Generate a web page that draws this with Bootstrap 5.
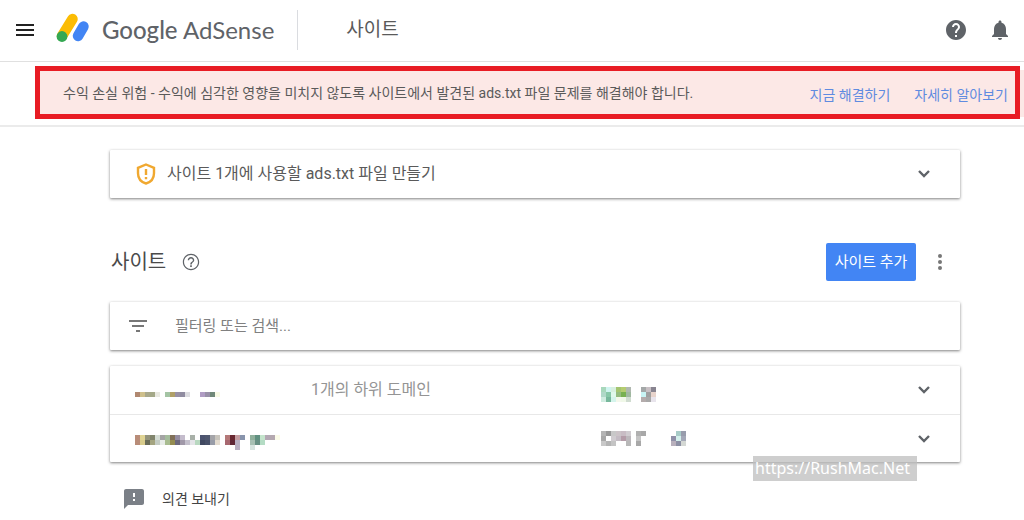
<!DOCTYPE html>
<html lang="ko">
<head>
<meta charset="utf-8">
<meta name="viewport" content="width=device-width, initial-scale=1">
<title>Google AdSense - 사이트</title>
<link href="https://cdn.jsdelivr.net/npm/bootstrap@5.3.0/dist/css/bootstrap.min.css" rel="stylesheet">
<style>
body{font-family:Roboto,"Noto Sans CJK KR",sans-serif;font-size:14px;line-height:20px;color:#5a5a5a;background:#fff}
svg{display:block;flex:none}
.icon-btn{border:0;background:none;padding:0;color:#5f6368}
.topbar{height:62px;border-bottom:1px solid #e0e0e0;padding:0 14px 2px 16px}
.brand-logo{overflow:visible;margin-right:12px}
.brand-name{font-family:Lato,sans-serif;font-size:24px;line-height:32px;color:#5f6368;text-decoration:none}
.brand-name b{font-weight:500}
.brand-rule{width:1px;height:40px;background:#dadce0;margin-left:23px}
.page-name{font-size:19px;line-height:28px;margin-left:48px}
.notice-strip{padding:4px 0 6px 35px;border-bottom:2px solid #ebebeb}
.notice-back{background:linear-gradient(#fce8e6,#fce8e6) right 4px/50% 47px no-repeat;padding-right:4px}
.notice{min-height:53px;border:5px solid #e81c24;background:#fce8e6;padding:0 7px 0 23px}
.notice a{color:#5f8be0;text-decoration:none}
.page-body{padding:23px 64px 0 110px}
.panel{background:#fff;box-shadow:0 1px 3px rgba(0,0,0,.5);min-height:48px;border-radius:1px}
.panel-row{height:48px;padding:0 29px 0 25px}
.panel-row + .panel-row{border-top:1px solid #e8e8e8}
.alert-text{font-size:16px;margin-left:10px}
.site-bar{margin:45px 0 21px;padding-left:1px}
.heading{font-size:20px;line-height:28px;margin:0;font-weight:400;color:#4a4a4a}
.add-btn{background:#4285f4;color:#fff;border:0;border-radius:2px;width:90px;height:38px;padding:0;font-size:15px}
.add-btn:hover{background:#3476e8;color:#fff}
.more-btn{margin:0 12px 0 16px}
.filter-icon{margin:0 28px 0 -6px}
.search-input{border:0;outline:0;background:none;flex:1;min-width:0;padding:0;font-size:15px;color:#555}
.search-input::placeholder{color:#808080;opacity:1}
.col-site{width:176px}
.col-sub{width:290px;color:#949494;font-size:16px}
.mosaic-low{margin-top:8px}
.feedback{color:#444;text-decoration:none;margin:27px 0 0 14px;gap:18px}
.watermark{position:absolute;right:43px;bottom:-19px;width:164px;height:25px;background:rgba(190,190,190,.75);color:#fff;font:16px/25px "Noto Sans",sans-serif;padding-left:2px;white-space:nowrap}
</style>
</head>
<body>
<header class="topbar d-flex align-items-center">
  <button class="icon-btn" aria-label="메뉴"><svg width="18" height="14" fill="none" stroke="#222" stroke-width="2"><path d="M0 2h18M0 7h18M0 12h18"/></svg></button>
  <svg class="brand-logo ms-4" width="32" height="30" viewBox="0 0 32 30" aria-hidden="true"><path d="M4 21 14.500 4" stroke="#fbbc04" stroke-width="10.500" stroke-linecap="round"/><circle cx="4" cy="21.500" r="5.400" fill="#34a853"/><path d="m20 21 5.500-9.500" stroke="#4285f4" stroke-width="10.500" stroke-linecap="round"/></svg>
  <a class="brand-name" href="#"><b>Google</b> AdSense</a>
  <span class="brand-rule"></span>
  <span class="page-name">사이트</span>
  <div class="ms-auto d-flex align-items-center gap-4">
    <button class="icon-btn" aria-label="도움말"><svg width="20" height="20" viewBox="2 2 20 20" fill="currentColor"><path d="M12 2C6.480 2 2 6.480 2 12s4.480 10 10 10 10-4.480 10-10S17.520 2 12 2zm1 17h-2v-2h2v2zm2.070-7.750-.9.920C13.450 12.900 13 13.500 13 15h-2v-.5c0-1.100.45-2.100 1.170-2.830l1.240-1.260c.37-.36.59-.86.59-1.410 0-1.100-.9-2-2-2s-2 .9-2 2H8c0-2.210 1.790-4 4-4s4 1.790 4 4c0 .88-.36 1.680-.93 2.250z"/></svg></button>
    <button class="icon-btn" aria-label="알림"><svg width="20" height="20" viewBox="3 2 18 20" fill="currentColor"><path d="M12 22c1.100 0 2-.9 2-2h-4c0 1.100.9 2 2 2zm6-6v-5c0-3.070-1.640-5.640-4.500-6.320V4c0-.83-.67-1.500-1.500-1.500s-1.500.67-1.500 1.500v.68C7.630 5.360 6 7.920 6 11v5l-2 2v1h16v-1l-2-2z"/></svg></button>
  </div>
</header>

<section class="notice-strip">
  <div class="notice-back">
    <div class="notice d-flex align-items-center">
      <span>수익 손실 위험 - 수익에 심각한 영향을 미치지 않도록 사이트에서 발견된 ads.txt 파일 문제를 해결해야 합니다.</span>
      <div class="ms-auto d-flex gap-4 pt-1 text-nowrap"><a href="#">지금 해결하기</a><a href="#">자세히 알아보기</a></div>
    </div>
  </div>
</section>

<main class="page-body">
  <section class="panel">
    <div class="panel-row d-flex align-items-center">
      <svg width="22" height="22" viewBox="1 1 22 22" fill="none" stroke="#f0a830" stroke-width="2.400" aria-hidden="true"><path d="m12 2.500 8 3.300v5.400c0 4.900-3.200 8.900-8 10.300-4.800-1.400-8-5.400-8-10.300V5.800z"/><path d="M12 7v6M12 15v2.200"/></svg>
      <span class="alert-text">사이트 1개에 사용할 ads.txt 파일 만들기</span>
      <button class="icon-btn ms-auto" aria-label="펼치기"><svg width="14" height="10" fill="none" stroke="currentColor" stroke-width="2.400"><path d="m2 2 5 5 5-5"/></svg></button>
    </div>
  </section>

  <div class="site-bar d-flex align-items-center">
    <h1 class="heading">사이트</h1>
    <button class="icon-btn ms-3" aria-label="사이트 도움말"><svg width="18" height="18" viewBox="1 1 22 22" fill="currentColor"><path d="M11 18h2v-2h-2v2zm1-16C6.480 2 2 6.480 2 12s4.480 10 10 10 10-4.480 10-10S17.520 2 12 2zm0 18.500c-4.700 0-8.500-3.800-8.500-8.500s3.800-8.500 8.500-8.500 8.500 3.800 8.500 8.500-3.800 8.500-8.500 8.500zm0-14.500c-2.210 0-4 1.790-4 4h1.700c0-1.300 1-2.300 2.300-2.300s2.300 1 2.300 2.300c0 2-3.200 1.750-3.200 5h1.800c0-2.250 3.100-2.500 3.100-5 0-2.210-1.790-4-4-4z"/></svg></button>
    <button class="btn add-btn ms-auto">사이트 추가</button>
    <button class="icon-btn more-btn" aria-label="더보기"><svg width="16" height="18" fill="#777"><circle cx="8" cy="3" r="2"/><circle cx="8" cy="9" r="2"/><circle cx="8" cy="15" r="2"/></svg></button>
  </div>

  <section class="panel mb-3">
    <div class="panel-row d-flex align-items-center">
      <svg class="filter-icon" width="18" height="12" viewBox="0 0 18 12" fill="#777" aria-hidden="true"><path d="M0 0h18v2H0zM3 5h12v2H3zM7 10h4v2H7z"/></svg>
      <input class="search-input" type="search" aria-label="필터링 또는 검색" placeholder="필터링 또는 검색...">
    </div>
  </section>

  <section class="panel position-relative">
    <div class="panel-row d-flex align-items-center">
      <div class="col-site mosaic-low"><svg width="90" height="15" viewBox="0 0 18 3" shape-rendering="crispEdges" aria-hidden="true"><g id="siteA"></g></svg></div>
      <span class="col-sub">1개의 하위 도메인</span>
      <svg class="mosaic-low" width="90" height="15" viewBox="0 0 18 3" shape-rendering="crispEdges" aria-hidden="true"><g id="statusA"></g></svg>
      <button class="icon-btn ms-auto" aria-label="펼치기"><svg width="14" height="10" fill="none" stroke="currentColor" stroke-width="2.400"><path d="m2 2 5 5 5-5"/></svg></button>
    </div>
    <div class="panel-row d-flex align-items-center">
      <div class="col-site mosaic-low"><svg width="150" height="15" viewBox="0 0 30 3" shape-rendering="crispEdges" aria-hidden="true"><g id="siteB"></g></svg></div>
      <span class="col-sub"></span>
      <svg width="90" height="15" viewBox="0 0 18 3" shape-rendering="crispEdges" aria-hidden="true"><g id="statusB"></g></svg>
      <button class="icon-btn ms-auto" aria-label="펼치기"><svg width="14" height="10" fill="none" stroke="currentColor" stroke-width="2.400"><path d="m2 2 5 5 5-5"/></svg></button>
    </div>
    <span class="watermark">https://RushMac.Net</span>
  </section>

  <a class="feedback d-inline-flex align-items-center" href="#">
    <svg width="20" height="20" viewBox="2 2 20 20" fill="#7b8087" aria-hidden="true"><path d="M20 2H4c-1.100 0-2 .9-2 2v18l4-4h14c1.100 0 2-.9 2-2V4c0-1.100-.9-2-2-2zm-7 12h-2v-2h2v2zm0-4h-2V6h2v4z"/></svg>
    <span>의견 보내기</span>
  </a>
</main>
<script>
// Redacted values: each entry is one row of mosaic cells, "-" leaves a cell empty.
const mosaics = {
  siteA: ["", "b08870 cfc08c a9a98c a4a888 e8e8e0 - a4c4a4 b0a068 9890a4 908ca0 dcdce0 - - b09cc4 9890a8 708878 f8fae4"],
  siteB: ["b88c78 e0d494 94947c 80846c d4dcd4 a4a4a4 a4bc9c 807058 948ca0 c4bccc - a8b0a8 - 4c5470 505870 a4a4a8 c8c4bc - b47878 682830 c49ca0 8894ac - 90b09c 609080 c4e4cc b4a8b4 b4a8b0 fbfbe8",
          "b88c78 d8cc8c 686c58 a4a480 c4ccc4 e8ece8 a8bc90 948c50 6c687c a098a8 c4c0cc e4e4e8 b8d8c0 404860 485068 989ca8 e4dcd0 - a86870 602838 b8b0c4 - - a8c0b4 689084 b4dcc4",
          "- - - - - - - - - - - - - - - - - - - - b8b0c4 - - d8e4e0"],
  statusA: ["a8d8bc d0f4f0 d8f0e0 a4c470 b4cc70 b0b8b0 - - a4a8a8 c8c0c4 888490",
            "b0d8c8 88c8a8 e0f8ec 94bc80 78b050 a0b8a0 - - c8f4f4 a0a0a0 e8d4cc",
            "d0ece0 78b89c d4f4ec f4f8ec f0f8e8 d0dcd0 - - b4acac a8a8a8 e8e4ec"],
  statusB: ["b4b4b4 989898 c8c8c8 ccc4c8 c8bcc4 d0ccd0 - b0b0b0 a8a8a8 - - - - - - a8ccc8 989cac",
            "a8a8a8 - d0ccd0 c4bcc4 b49ca8 bcb8bc - c4c4c4 - - - - - - 9090a8 d4f0ec a4a8b8",
            "c8c8c8 b4b4b4 c4c4c4 - - b8b8b8 - a8a8a8 - - - - - - b8b0bc 8c90a4 d4d8d4"]
};
for (const [id, rows] of Object.entries(mosaics)) {
  const group = document.getElementById(id);
  rows.forEach((row, y) => row.split(" ").forEach((color, x) => {
    if (!color || color === "-") return;
    const cell = document.createElementNS("http://www.w3.org/2000/svg", "rect");
    for (const [k, v] of Object.entries({x, y, width: 1, height: 1, fill: "#" + color})) cell.setAttribute(k, v);
    group.append(cell);
  }));
}
</script>
<script src="https://cdn.jsdelivr.net/npm/bootstrap@5.3.0/dist/js/bootstrap.bundle.min.js"></script>
</body>
</html>
